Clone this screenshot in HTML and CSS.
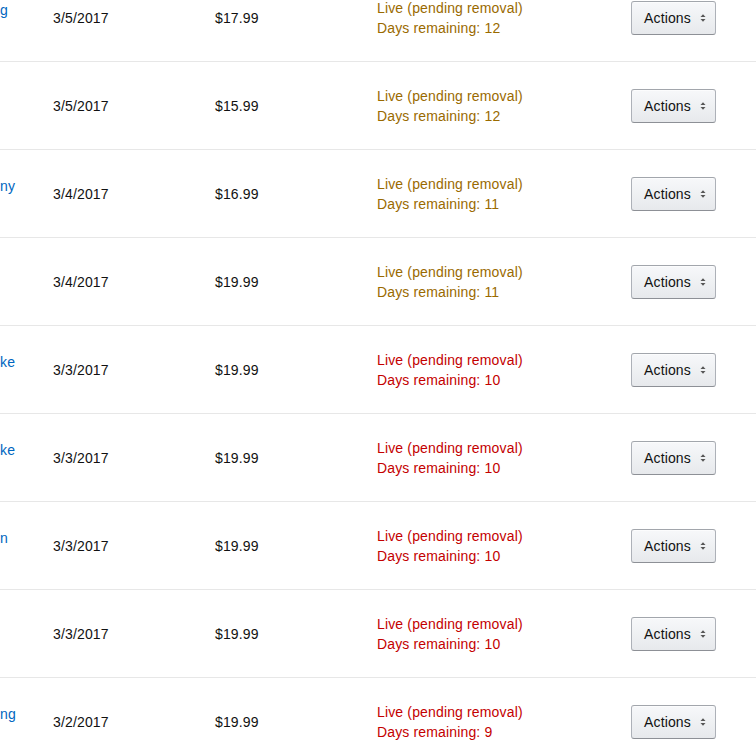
FILE: index.html
```html
<!DOCTYPE html>
<html>
<head>
<meta charset="utf-8">
<link rel="stylesheet" href="styles.css">
</head>
<body>
<div class="list">
  <div class="row">
    <div class="title"><a href="#">g</a></div>
    <div class="cell">3/5/2017</div>
    <div class="cell">$17.99</div>
    <div class="status warn"><div>Live (pending removal)</div><div>Days remaining: 12</div></div>
    <div class="act"><button class="btn">Actions<svg class="caret" width="6" height="10" viewBox="0 0 6 10"><polygon points="0.5,4 3,1.2 5.5,4"/><polygon points="0.5,6 3,8.8 5.5,6"/></svg></button></div>
  </div>
  <div class="row">
    <div class="title"></div>
    <div class="cell">3/5/2017</div>
    <div class="cell">$15.99</div>
    <div class="status warn"><div>Live (pending removal)</div><div>Days remaining: 12</div></div>
    <div class="act"><button class="btn">Actions<svg class="caret" width="6" height="10" viewBox="0 0 6 10"><polygon points="0.5,4 3,1.2 5.5,4"/><polygon points="0.5,6 3,8.8 5.5,6"/></svg></button></div>
  </div>
  <div class="row">
    <div class="title"><a href="#">ny</a></div>
    <div class="cell">3/4/2017</div>
    <div class="cell">$16.99</div>
    <div class="status warn"><div>Live (pending removal)</div><div>Days remaining: 11</div></div>
    <div class="act"><button class="btn">Actions<svg class="caret" width="6" height="10" viewBox="0 0 6 10"><polygon points="0.5,4 3,1.2 5.5,4"/><polygon points="0.5,6 3,8.8 5.5,6"/></svg></button></div>
  </div>
  <div class="row">
    <div class="title"></div>
    <div class="cell">3/4/2017</div>
    <div class="cell">$19.99</div>
    <div class="status warn"><div>Live (pending removal)</div><div>Days remaining: 11</div></div>
    <div class="act"><button class="btn">Actions<svg class="caret" width="6" height="10" viewBox="0 0 6 10"><polygon points="0.5,4 3,1.2 5.5,4"/><polygon points="0.5,6 3,8.8 5.5,6"/></svg></button></div>
  </div>
  <div class="row">
    <div class="title"><a href="#">ke</a></div>
    <div class="cell">3/3/2017</div>
    <div class="cell">$19.99</div>
    <div class="status error"><div>Live (pending removal)</div><div>Days remaining: 10</div></div>
    <div class="act"><button class="btn">Actions<svg class="caret" width="6" height="10" viewBox="0 0 6 10"><polygon points="0.5,4 3,1.2 5.5,4"/><polygon points="0.5,6 3,8.8 5.5,6"/></svg></button></div>
  </div>
  <div class="row">
    <div class="title"><a href="#">ke</a></div>
    <div class="cell">3/3/2017</div>
    <div class="cell">$19.99</div>
    <div class="status error"><div>Live (pending removal)</div><div>Days remaining: 10</div></div>
    <div class="act"><button class="btn">Actions<svg class="caret" width="6" height="10" viewBox="0 0 6 10"><polygon points="0.5,4 3,1.2 5.5,4"/><polygon points="0.5,6 3,8.8 5.5,6"/></svg></button></div>
  </div>
  <div class="row">
    <div class="title"><a href="#">n</a></div>
    <div class="cell">3/3/2017</div>
    <div class="cell">$19.99</div>
    <div class="status error"><div>Live (pending removal)</div><div>Days remaining: 10</div></div>
    <div class="act"><button class="btn">Actions<svg class="caret" width="6" height="10" viewBox="0 0 6 10"><polygon points="0.5,4 3,1.2 5.5,4"/><polygon points="0.5,6 3,8.8 5.5,6"/></svg></button></div>
  </div>
  <div class="row">
    <div class="title"></div>
    <div class="cell">3/3/2017</div>
    <div class="cell">$19.99</div>
    <div class="status error"><div>Live (pending removal)</div><div>Days remaining: 10</div></div>
    <div class="act"><button class="btn">Actions<svg class="caret" width="6" height="10" viewBox="0 0 6 10"><polygon points="0.5,4 3,1.2 5.5,4"/><polygon points="0.5,6 3,8.8 5.5,6"/></svg></button></div>
  </div>
  <div class="row">
    <div class="title"><a href="#">ng</a></div>
    <div class="cell">3/2/2017</div>
    <div class="cell">$19.99</div>
    <div class="status error"><div>Live (pending removal)</div><div>Days remaining: 9</div></div>
    <div class="act"><button class="btn">Actions<svg class="caret" width="6" height="10" viewBox="0 0 6 10"><polygon points="0.5,4 3,1.2 5.5,4"/><polygon points="0.5,6 3,8.8 5.5,6"/></svg></button></div>
  </div>
</div>
</body>
</html>
```
FILE: styles.css
```css
html, body {
  margin: 0;
  padding: 0;
  background: #fff;
  overflow: hidden;
}
body {
  font-family: "Liberation Sans", Arial, sans-serif;
  font-size: 14px;
  letter-spacing: 0.15px;
  line-height: 20px;
  color: #111;
}
.list {
  margin-top: -26px;
}
.row {
  display: grid;
  grid-template-columns: 53px 162px 162px 254px 85px 1fr;
  align-items: center;
  height: 88px;
  box-sizing: border-box;
  border-bottom: 1px solid #e7e7e7;
}
.title {
  min-height: 20px;
  margin-bottom: 16px;
  white-space: nowrap;
}
.title a {
  color: #0066c0;
  text-decoration: none;
}
.cell {
  white-space: nowrap;
}
.status {
  white-space: nowrap;
}
.status.warn {
  color: #9a6a00;
}
.status.error {
  color: #c40000;
}
.act {
  display: flex;
  align-items: center;
}
.btn {
  display: flex;
  align-items: center;
  justify-content: space-between;
  width: 85px;
  height: 34px;
  box-sizing: border-box;
  padding: 0 9px 0 12px;
  border: 1px solid #adb1b8;
  border-top-color: #a2a6ac;
  border-bottom-color: #8d9096;
  border-radius: 3px;
  background: linear-gradient(to bottom, #f7f8fa, #e7e9ec);
  box-shadow: 0 1px 0 rgba(255, 255, 255, 0.6) inset;
  font-family: "Liberation Sans", Arial, sans-serif;
  font-size: 14px;
  letter-spacing: 0.15px;
  color: #111;
  cursor: pointer;
}
.caret {
  fill: #555;
  display: block;
}
```
